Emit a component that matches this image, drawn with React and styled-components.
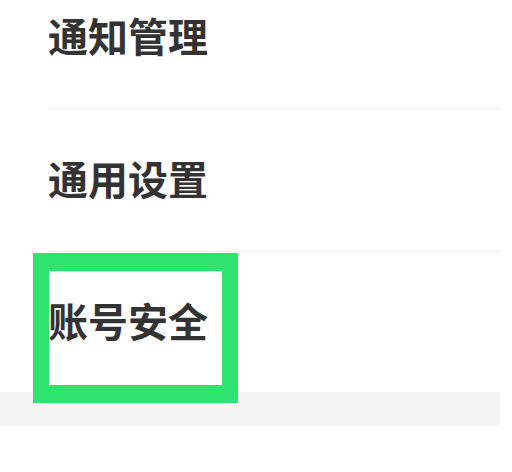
import styled, { createGlobalStyle } from "styled-components";

const GlobalStyle = createGlobalStyle`
  html, body {
    margin: 0;
    padding: 0;
    background: #ffffff;
  }
  body {
    width: 512px;
    height: 472px;
    overflow: hidden;
    font-family: "Noto Sans CJK SC", "Noto Sans", sans-serif;
  }
`;

const items = ["通知管理", "通用设置", "账号安全"];

const App = () => {
  return (
    <>
      <GlobalStyle />
      <Page>
        <MenuList>
          {items.map((label, i) => (
            <MenuRow key={label} $last={i === items.length - 1}>
              <Label>{label}</Label>
              {i === items.length - 1 && <Highlight />}
            </MenuRow>
          ))}
        </MenuList>
        <SectionGap />
      </Page>
    </>
  );
};

const Page = styled.div`
  width: 500px;
  background: #ffffff;
`;

const MenuList = styled.ul`
  list-style: none;
  margin: -34px 0 0;
  padding: 0;
`;

const MenuRow = styled.li`
  position: relative;
  display: flex;
  align-items: center;
  height: ${(p) => (p.$last ? "140px" : "142px")};
  margin-left: 48px;
  border-bottom: ${(p) => (p.$last ? "none" : "1.5px solid #efefef")};
`;

const Label = styled.span`
  font-size: 40px;
  font-weight: 700;
  line-height: 1;
  color: #333333;
  margin-bottom: 5px;
`;

const Highlight = styled.div`
  position: absolute;
  left: -15px;
  top: 1px;
  width: 173px;
  height: 114px;
  border-style: solid;
  border-color: #2fe36f;
  border-width: 18px 16px;
`;

const SectionGap = styled.div`
  height: 34px;
  background: #f5f5f5;
`;

export default App;
